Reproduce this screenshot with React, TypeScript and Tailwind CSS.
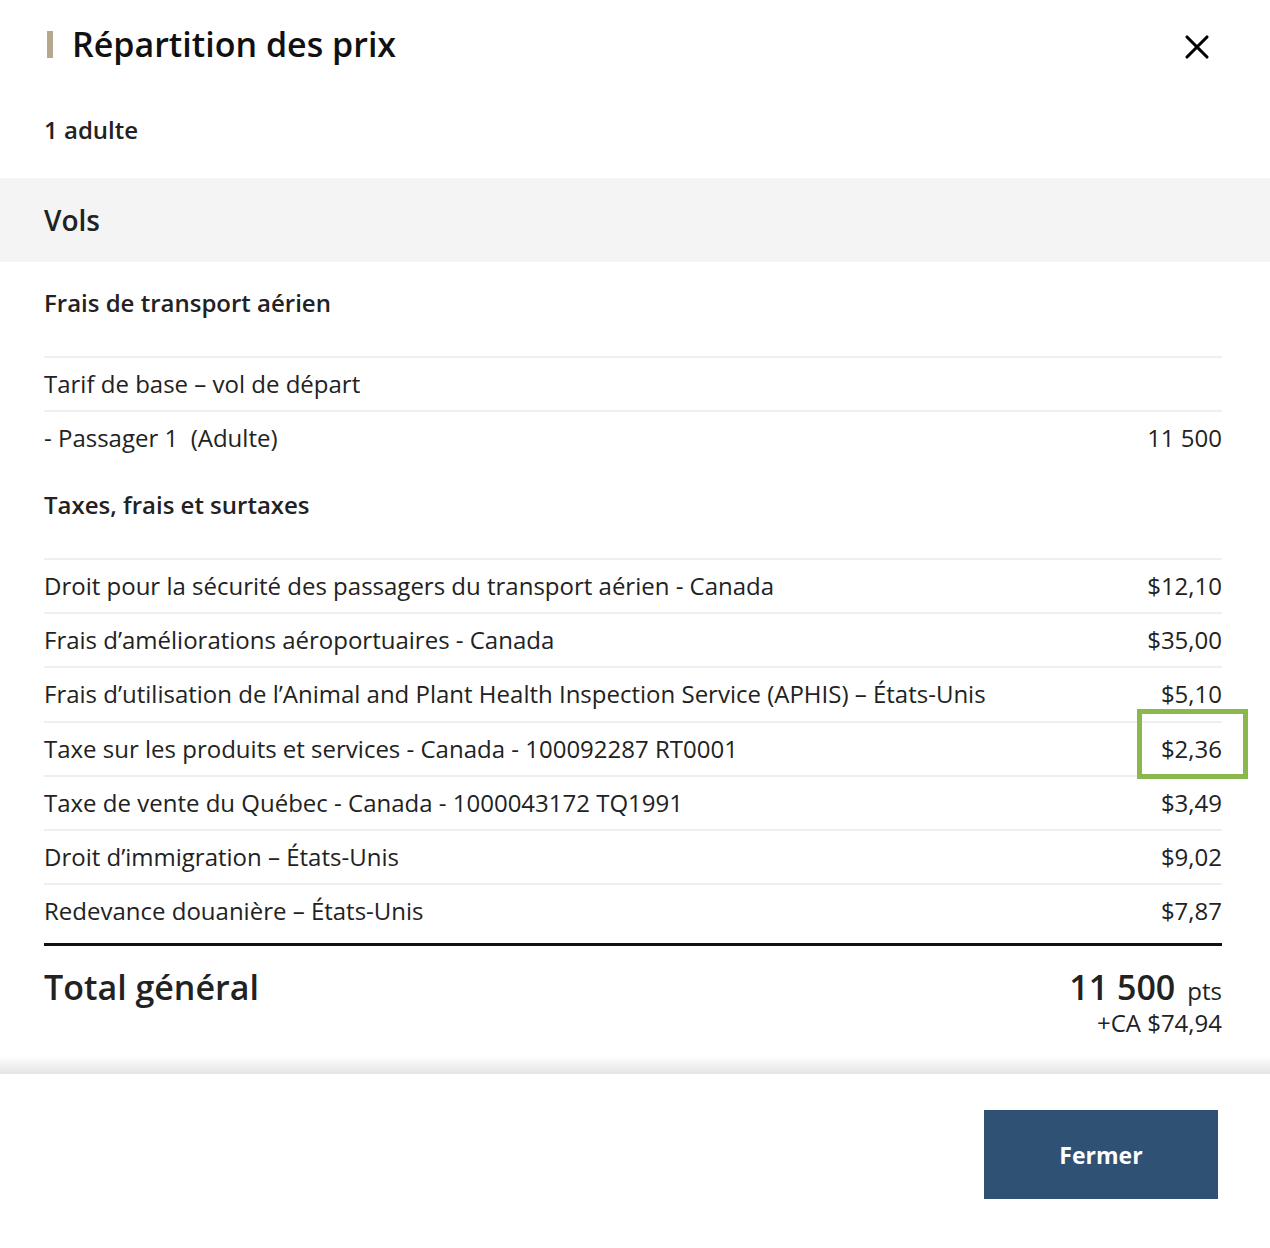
import { X } from "lucide-react";

type Fee = { label: string; amount: string; highlight?: boolean };

const taxes: Fee[] = [
    { label: "Droit pour la sécurité des passagers du transport aérien - Canada", amount: "$12,10" },
    { label: "Frais d’améliorations aéroportuaires - Canada", amount: "$35,00" },
    { label: "Frais d’utilisation de l’Animal and Plant Health Inspection Service (APHIS) – États-Unis", amount: "$5,10" },
    { label: "Taxe sur les produits et services - Canada - 100092287 RT0001", amount: "$2,36", highlight: true },
    { label: "Taxe de vente du Québec - Canada - 1000043172 TQ1991", amount: "$3,49" },
    { label: "Droit d’immigration – États-Unis", amount: "$9,02" },
    { label: "Redevance douanière – États-Unis", amount: "$7,87" },
];

function Row({ label, amount, highlight }: Fee) {
    return (
        <div className="flex h-[54.2px] items-center justify-between border-t-2 border-[#efefef] text-[24px] leading-[32px] text-[#222]">
            <span>{label}</span>
            <span className="relative">
                {amount}
                {highlight && (
                    <span className="absolute -left-[24px] -right-[26px] -top-[24px] -bottom-[14px] border-[5px] border-[#8bb84c]" />
                )}
            </span>
        </div>
    );
}

export default function App() {
    return (
        <div className="min-h-[1248px] w-[1270px] bg-white font-['Open_Sans',sans-serif] text-[#222]">
            {/* Header */}
            <div className="flex items-start justify-between pl-[47px] pt-[21px]">
                <h1 className="flex items-center text-[34px] font-semibold leading-[46px] text-[#111]">
                    <span className="mr-[19px] h-[27px] w-[6px] bg-[#b5a88e]" />
                    Répartition des prix
                </h1>
                <button className="mr-[53px] mt-[6px] text-black">
                    <X className="h-[40px] w-[40px]" strokeWidth={1.9} />
                </button>
            </div>
            <div className="mt-[47px] px-[44px] text-[24px] font-semibold leading-[32px]">1 adulte</div>

            {/* Vols */}
            <div className="mt-[32px] flex h-[84px] items-center bg-[#f4f4f4] px-[44px] text-[28px] font-semibold">
                Vols
            </div>

            <div className="pl-[44px] pr-[48px]">
                <div className="pt-[25px] pb-[37px] text-[24px] font-semibold leading-[32px]">Frais de transport aérien</div>
                <div className="flex h-[54px] items-center border-t-2 border-[#efefef] text-[24px] leading-[32px]">
                    Tarif de base – vol de départ
                </div>
                <div className="flex h-[54px] items-center justify-between border-t-2 border-[#efefef] text-[24px] leading-[32px]">
                    <span>- Passager 1&nbsp;&nbsp;(Adulte)</span>
                    <span>11 500</span>
                </div>
                <div className="pt-[25px] pb-[37px] text-[24px] font-semibold leading-[32px]">Taxes, frais et surtaxes</div>
                {taxes.map((t) => (
                    <Row key={t.label} {...t} />
                ))}

                {/* Total */}
                <div className="mt-[6px] flex justify-between border-t-[3px] border-[#111] pt-[18px]">
                    <div className="text-[34px] font-semibold leading-[46px]">Total général</div>
                    <div className="text-right">
                        <div className="leading-[46px]">
                            <span className="text-[34px] font-semibold">11 500</span>
                            <span className="ml-[12px] text-[24px]">pts</span>
                        </div>
                        <div className="-mt-[9px] text-[24px] leading-[30px]">+CA $74,94</div>
                    </div>
                </div>
            </div>

            {/* Footer */}
            <div className="mt-[18px] h-[18px] bg-gradient-to-b from-white to-[#e4e4e4]" />
            <div className="flex justify-end px-[52px] pt-[36px]">
                <button className="h-[89px] w-[234px] bg-[#2f5274] text-[23px] font-bold text-white">Fermer</button>
            </div>
        </div>
    );
}
